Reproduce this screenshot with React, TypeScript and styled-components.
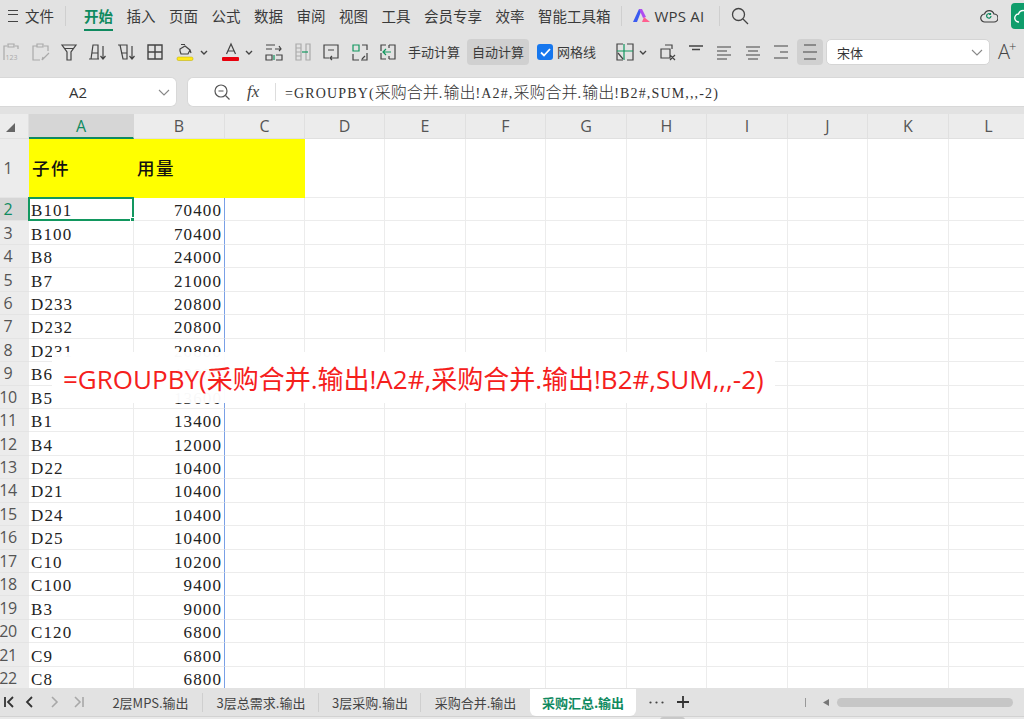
import { FC, ReactNode } from 'react'
import styled, { createGlobalStyle } from 'styled-components'

const GREEN = '#0f8a5f'
const CJK = '"Noto Sans CJK SC", "Noto Sans", sans-serif'

const Global = createGlobalStyle`
  html, body { margin: 0; padding: 0; background: #e2e2e2; }
  body { font-family: ${CJK}; overflow: hidden; }
`

const Page = styled.div`
  width: 1024px;
  height: 719px;
  display: flex;
  flex-direction: column;
  overflow: hidden;
  background: #e2e2e2;
  color: #333;
`

const MenuBar = styled.div`
  height: 35px;
  box-sizing: border-box;
  padding: 0 0 4px 8px;
  flex: none;
  display: flex;
  align-items: center;
  font-size: 14.5px;
`

const MenuItem = styled.div<{ $active?: boolean; $last?: boolean }>`
  position: relative;
  margin-right: ${(p) => (p.$last ? 0 : 13.5)}px;
  height: 31px;
  line-height: 31px;
  white-space: nowrap;
  color: ${(p) => (p.$active ? GREEN : '#3a3a3a')};
  font-weight: ${(p) => (p.$active ? 700 : 400)};
  ${(p) =>
    p.$active &&
    `&::after {
      content: '';
      position: absolute;
      left: 0;
      right: 0;
      bottom: 0;
      height: 2px;
      background: ${GREEN};
    }`}
`

const MenuSep = styled.div<{ $ml: number; $mr: number }>`
  width: 1px;
  height: 20px;
  background: #cfcfcf;
  margin: 0 ${(p) => p.$mr}px 0 ${(p) => p.$ml}px;
`

const Burger = styled.div`
  width: 10px;
  height: 10px;
  margin-right: 7px;
  border-top: 1.5px solid #444;
  border-bottom: 1.5px solid #444;
  position: relative;
  &::after {
    content: '';
    position: absolute;
    left: 0;
    right: 0;
    top: 3px;
    height: 1.5px;
    background: #444;
  }
`

const Brand = styled.div`
  display: flex;
  align-items: center;
  gap: 5px;
  font-family: 'Open Sans', sans-serif;
  font-size: 15px;
  letter-spacing: 0.2px;
  color: #3a3a3a;
`

const Spacer = styled.div`
  flex: 1;
`

const GreenTab = styled.div`
  width: 13px;
  height: 26px;
  margin-left: 13px;
  border-radius: 4px 0 0 4px;
  background: #0f9d6b;
  display: flex;
  align-items: center;
  padding-left: 3px;
  box-sizing: border-box;
  overflow: hidden;
  svg {
    flex: none;
  }
`

const ToolBar = styled.div`
  height: 34px;
  flex: none;
  display: flex;
  align-items: center;
  font-size: 13px;
`

const Tool = styled.div<{ $ml: number; $w?: number }>`
  flex: none;
  width: ${(p) => p.$w ?? 20}px;
  height: 20px;
  margin-left: ${(p) => p.$ml}px;
  display: flex;
  align-items: center;
  justify-content: center;
  color: #444;
`

const ToolText = styled.div<{ $ml: number; $pill?: boolean }>`
  flex: none;
  margin-left: ${(p) => p.$ml}px;
  padding: 0 ${(p) => (p.$pill ? 5 : 0)}px;
  height: 26px;
  line-height: 26px;
  border-radius: 4px;
  background: ${(p) => (p.$pill ? '#d0d0d0' : 'transparent')};
  color: #3a3a3a;
  white-space: nowrap;
`

const CheckBox = styled.div`
  flex: none;
  width: 16px;
  height: 16px;
  margin-left: 8px;
  border-radius: 3px;
  background: #1677ee;
  display: flex;
  align-items: center;
  justify-content: center;
`

const PillTool = styled.div`
  flex: none;
  width: 26px;
  height: 26px;
  margin-left: 6px;
  border-radius: 4px;
  background: #d0d0d0;
  color: #444;
  display: flex;
  align-items: center;
  justify-content: center;
`

const FontSelect = styled.div`
  flex: none;
  width: 164px;
  height: 26px;
  margin-left: 3px;
  box-sizing: border-box;
  padding: 0 6px 0 10px;
  background: #fff;
  border: 1px solid #d5d5d5;
  border-radius: 5px;
  display: flex;
  align-items: center;
  justify-content: space-between;
  font-size: 13px;
  color: #333;
`

const GrowFont = styled.div`
  flex: none;
  margin-left: 8px;
  display: flex;
  font-family: 'Open Sans', sans-serif;
  font-size: 20px;
  line-height: 26px;
  font-weight: 300;
  color: #444;
  sup {
    font-size: 13px;
    line-height: 14px;
    margin-left: -1px;
  }
`

const FormulaBar = styled.div`
  height: 30px;
  margin-top: 8px;
  flex: none;
  display: flex;
  gap: 10px;
`

const NameBox = styled.div`
  flex: none;
  width: 177px;
  box-sizing: border-box;
  background: #fff;
  border: 1px solid #d8d8d8;
  border-left: 0;
  border-radius: 0 6px 6px 0;
  display: flex;
  align-items: center;
  padding-left: 69px;
  padding-right: 6px;
  justify-content: space-between;
  font-family: 'Open Sans', sans-serif;
  font-size: 15px;
  color: #333;
`

const FormulaBox = styled.div`
  flex: 1;
  background: #fff;
  border: 1px solid #d8d8d8;
  border-right: 0;
  border-radius: 6px 0 0 6px;
  display: flex;
  align-items: center;
  padding-left: 25px;
  color: #444;
`

const FxLabel = styled.div`
  font-family: 'Liberation Serif', serif;
  font-style: italic;
  font-size: 17px;
  margin-left: 16px;
  width: 28px;
  color: #444;
`

const FxSep = styled.div`
  width: 1px;
  height: 18px;
  background: #ddd;
  margin-right: 9px;
`

const FormulaText = styled.div`
  font-family: 'Liberation Serif', ${CJK};
  font-size: 14px;
  letter-spacing: 1.15px;
  line-height: 28px;
  white-space: pre;
  color: #333;
  span {
    font-size: 16px;
    letter-spacing: 0;
    font-family: ${CJK};
    font-weight: 300;
  }
`

const Sheet = styled.div`
  position: relative;
  height: 574px;
  margin-top: 7px;
  flex: none;
  background: #fff;
  overflow: hidden;
`

const COLS = '29px 105px 91px 80px 80px 81px 80px 81px 80px 81px 80px 81px 80px'

const Row = styled.div<{ $h: number }>`
  display: grid;
  grid-template-columns: ${COLS};
  grid-template-rows: ${(p) => p.$h}px;
  height: ${(p) => p.$h}px;
`

const ColHead = styled.div<{ $active?: boolean }>`
  box-sizing: border-box;
  display: flex;
  align-items: center;
  justify-content: center;
  font-family: 'Open Sans', sans-serif;
  font-size: 16px;
  background: ${(p) => (p.$active ? '#d6d6d6' : '#ececec')};
  color: ${(p) => (p.$active ? GREEN : '#555')};
  border-right: 1px solid ${(p) => (p.$active ? '#d6d6d6' : '#e0e0e0')};
  border-bottom: ${(p) => (p.$active ? `2px solid ${GREEN}` : '1px solid #e0e0e0')};
`

const Corner = styled(ColHead)`
  color: #666;
  svg {
    margin: 2px 0 0 -8px;
  }
`

const RowHead = styled.div<{ $active?: boolean }>`
  box-sizing: border-box;
  display: flex;
  align-items: center;
  justify-content: center;
  padding-right: 13px;
  font-family: 'Open Sans', sans-serif;
  font-size: 16px;
  line-height: 18px;
  letter-spacing: -0.3px;
  background: ${(p) => (p.$active ? '#d6d6d6' : '#ececec')};
  color: ${(p) => (p.$active ? GREEN : '#555')};
  border-bottom: 1px solid #e4e4e4;
`

const Cell = styled.div<{ $right?: boolean; $fill?: boolean; $edge?: boolean }>`
  position: relative;
  box-sizing: border-box;
  padding: 3px 2px 0;
  display: flex;
  align-items: center;
  justify-content: ${(p) => (p.$right ? 'flex-end' : 'flex-start')};
  font-family: 'Liberation Serif', ${CJK};
  font-size: 17px;
  line-height: 17px;
  letter-spacing: 1.1px;
  color: #222;
  background: ${(p) => (p.$fill ? '#ffff00' : '#fff')};
  border-bottom: 1px solid ${(p) => (p.$fill ? '#ffff00' : '#ececec')};
  border-right: 1px solid
    ${(p) => (p.$edge ? '#7aa0e6' : p.$fill ? '#ffff00' : '#ececec')};
`

const HeadLabel = styled.span`
  font-family: ${CJK};
  font-size: 17.5px;
  font-weight: 500;
  letter-spacing: 1.5px;
  margin-top: -5px;
  padding-left: 1px;
  color: #111;
`

const ActiveFrame = styled.div`
  position: absolute;
  inset: -1px -1px -1px -1px;
  border: 2px solid #12975f;
  pointer-events: none;
  &::after {
    content: '';
    position: absolute;
    right: -3px;
    bottom: -3px;
    width: 5px;
    height: 5px;
    background: #12975f;
    border: 1px solid #fff;
    box-sizing: border-box;
  }
`

const Callout = styled.div`
  position: absolute;
  left: 52px;
  top: 238px;
  width: 723px;
  height: 51px;
  box-sizing: border-box;
  padding-left: 11px;
  background: rgba(255, 255, 255, 0.97);
  display: flex;
  align-items: center;
  font-family: 'Open Sans', ${CJK};
  font-size: 26px;
  color: #f5201c;
  white-space: pre;
`

const TabBar = styled.div`
  height: 28px;
  flex: none;
  display: flex;
  align-items: center;
  background: #e2e2e2;
  border-bottom: 1px solid #d2d2d2;
  box-sizing: content-box;
`

const NavButton = styled.div<{ $ml: number; $dim?: boolean }>`
  flex: none;
  margin-left: ${(p) => p.$ml}px;
  display: flex;
  color: ${(p) => (p.$dim ? '#a8a8a8' : '#333')};
`

const SheetTab = styled.div<{ $active?: boolean; $w: number; $ml?: number; $sep?: boolean }>`
  flex: none;
  width: ${(p) => p.$w}px;
  height: 27px;
  margin-left: ${(p) => p.$ml ?? 0}px;
  display: flex;
  align-items: center;
  justify-content: center;
  font-size: 13px;
  white-space: nowrap;
  border-radius: ${(p) => (p.$active ? '0 0 6px 6px' : '0')};
  background: ${(p) => (p.$active ? '#fff' : 'transparent')};
  color: ${(p) => (p.$active ? GREEN : '#444')};
  font-weight: ${(p) => (p.$active ? 700 : 400)};
  position: relative;
  ${(p) =>
    p.$sep &&
    `&::after {
      content: '';
      position: absolute;
      right: 0;
      top: 4px;
      bottom: 4px;
      width: 1px;
      background: #cfcfcf;
    }`}
`

const ScrollTrack = styled.div`
  width: 176px;
  height: 9px;
  margin-left: 8px;
  border-radius: 5px;
  background: #c6c6c6;
  flex: none;
`

const TickBar = styled.div`
  width: 1px;
  height: 9px;
  margin-left: 116px;
  background: #999;
  flex: none;
`

const FootStrip = styled.div`
  flex: 1;
  background: #e9e9e9;
  padding-left: 660px;
`

const FootThumb = styled.div`
  width: 25px;
  height: 3px;
  border-radius: 3px 3px 0 0;
  background: #c8c8c8;
`

const Icon: FC<{ children: ReactNode }> = ({ children }) => (
  <svg width={20} height={20} viewBox="0 0 20 20" fill="none" stroke="currentColor" strokeWidth={1.2}>
    {children}
  </svg>
)

const Caret = () => (
  <svg width="8" height="5" viewBox="0 0 8 5" fill="none" stroke="#444" strokeWidth={1.4}>
    <path d="M1 1l3 3 3-3" />
  </svg>
)

const Chevron = () => (
  <svg width="12" height="7" viewBox="0 0 12 7" fill="none" stroke="#888" strokeWidth={1.1}>
    <path d="M1 1l5 5 5-5" />
  </svg>
)

const rows: [string, string][] = [
  ['B101', '70400'],
  ['B100', '70400'],
  ['B8', '24000'],
  ['B7', '21000'],
  ['D233', '20800'],
  ['D232', '20800'],
  ['D231', '20800'],
  ['B6', '18000'],
  ['B5', '13600'],
  ['B1', '13400'],
  ['B4', '12000'],
  ['D22', '10400'],
  ['D21', '10400'],
  ['D24', '10400'],
  ['D25', '10400'],
  ['C10', '10200'],
  ['C100', '9400'],
  ['B3', '9000'],
  ['C120', '6800'],
  ['C9', '6800'],
  ['C8', '6800'],
]

const letters = 'ABCDEFGHIJKL'.split('')
const menus = ['插入', '页面', '公式', '数据', '审阅', '视图', '工具', '会员专享', '效率']

export default function App() {
  return (
    <Page>
      <Global />
      <MenuBar>
        <Burger />
        <MenuItem $last>文件</MenuItem>
        <MenuSep $ml={11} $mr={18} />
        <MenuItem $active>开始</MenuItem>
        {menus.map((m) => (
          <MenuItem key={m}>{m}</MenuItem>
        ))}
        <MenuItem $last>智能工具箱</MenuItem>
        <MenuSep $ml={10} $mr={11} />
        <Brand>
          <svg width="17" height="13" viewBox="0 0 17 13">
            <path d="M0 13L6 0h3L4 13z" fill="#3b5bf0" />
            <path d="M6 0h3l4 8-3 1z" fill="#b04df0" />
            <path d="M9 13l2-5 6 5z" fill="#ff5f8f" />
          </svg>
          WPS AI
        </Brand>
        <MenuSep $ml={15} $mr={11} />
        <svg width="18" height="18" viewBox="0 0 18 18" fill="none" stroke="#444" strokeWidth={1.3}>
          <circle cx="7.5" cy="7.5" r="6" />
          <path d="M12 12l5 5" />
        </svg>
        <Spacer />
        <svg width="18" height="16" viewBox="0 0 18 16" fill="none" stroke="#3c3c3c" strokeWidth={1.2}>
          <path d="M5 14a4 4 0 0 1-.5-8 5 5 0 0 1 9.5 0 4 4 0 0 1 0 8z" />
          <path d="M11 8a2.2 2.2 0 1 1-.8-1.8M10.5 5v1.5H9" stroke="#0f8a5f" />
        </svg>
        <GreenTab>
          <svg width="20" height="16" viewBox="0 0 20 16" fill="none" stroke="#fff" strokeWidth={1.4}>
            <path d="M5 14a4 4 0 0 1-.5-8 5 5 0 0 1 9.5 0" />
          </svg>
        </GreenTab>
      </MenuBar>

      <ToolBar>
        <Tool $ml={1}>
          <Icon>
            <g stroke="#aaa">
              <path d="M6 4H3v14M14 4h3v3M7 2h6v3H7z" />
              <text x="4.5" y="18" fontSize="7" fill="#aaa" stroke="none" fontFamily="Open Sans">123</text>
            </g>
          </Icon>
        </Tool>
        <Tool $ml={10}>
          <Icon>
            <g stroke="#aaa">
              <path d="M6 4H2v14h7M13 4h4v5M6 2h6v3H6z" />
              <path d="M11 18l7-7M11 18l1-3" />
            </g>
          </Icon>
        </Tool>
        <Tool $ml={8}>
          <Icon>
            <path d="M3 3h14l-5 7v8H8v-8zM6 6.5h8" />
          </Icon>
        </Tool>
        <Tool $ml={9}>
          <Icon>
            <path d="M1 17h10M3 17L5 3h5v14M4 11h6M15 4v13M12.5 14l2.5 3 2.5-3" />
          </Icon>
        </Tool>
        <Tool $ml={9}>
          <Icon>
            <path d="M1 3h9v14H6L3 3M4 11h6M15 4v13M12.5 14l2.5 3 2.5-3" />
          </Icon>
        </Tool>
        <Tool $ml={8}>
          <Icon>
            <path d="M3 3h14v14H3zM3 10h14M10 3v14" strokeWidth={1.4} />
          </Icon>
        </Tool>
        <Tool $ml={10}>
          <Icon>
            <path d="M6 2.5h4M5 7l5-3 5 4-2 4H6l-1-3zM15 8l1 3" />
            <rect x="2" y="15" width="16" height="3.5" rx="1.5" fill="#ffe81a" stroke="#b8a800" strokeWidth={0.5} />
          </Icon>
        </Tool>
        <Tool $ml={5} $w={8}>
          <Caret />
        </Tool>
        <Tool $ml={13}>
          <Icon>
            <path d="M5.5 12L10 2l4.5 10M7 9h6" />
            <rect x="1" y="15" width="17" height="4" rx="1" fill="#e8000c" stroke="none" />
          </Icon>
        </Tool>
        <Tool $ml={4} $w={8}>
          <Caret />
        </Tool>
        <Tool $ml={11}>
          <Icon>
            <path d="M2 3h9M2 7h6M15 4l2 3-2 2M11 7h6M2 13h6v5H2zM12 13h6v5h-6" />
            <path d="M10 13v5" stroke="#12975f" />
          </Icon>
        </Tool>
        <Tool $ml={9}>
          <Icon>
            <g stroke="#aaa">
              <path d="M3 2h5v16H3zM13 2h4v16h-4zM3 6h5M3 10h5M3 14h5" />
            </g>
            <path d="M9 10h6" stroke="#12975f" />
          </Icon>
        </Tool>
        <Tool $ml={8}>
          <Icon>
            <path d="M8 16H3V3h14v13h-5M7 8h6M13 16H9M11 14l-2 2 2 2" />
          </Icon>
        </Tool>
        <Tool $ml={9}>
          <Icon>
            <path d="M3 3h6v6H3z" stroke="#12975f" />
            <path d="M12 3h5v5M3 12v6h6M17 11v7h-6M12 17l3-3" />
          </Icon>
        </Tool>
        <Tool $ml={8}>
          <Icon>
            <path d="M11 3h6v14h-6M3 9V3h5M3 11v6h5M11 3v3M11 14v3" />
            <path d="M13 10H5M8 7l-3 3 3 3" stroke="#12975f" />
          </Icon>
        </Tool>
        <ToolText $ml={10}>手动计算</ToolText>
        <ToolText $ml={7} $pill>自动计算</ToolText>
        <CheckBox>
          <svg width="11" height="9" viewBox="0 0 11 9" fill="none" stroke="#fff" strokeWidth={1.8}>
            <path d="M1 4.5L4 7.5 10 1" />
          </svg>
        </CheckBox>
        <ToolText $ml={4}>网格线</ToolText>
        <Tool $ml={19}>
          <Icon>
            <path d="M8 2H2v16h6M12 2h6v16h-6" />
            <path d="M2 9h16M9 2v16" stroke="#12975f" />
            <path d="M3 11l5 6" />
          </Icon>
        </Tool>
        <Tool $ml={4} $w={8}>
          <Caret />
        </Tool>
        <Tool $ml={11}>
          <Icon>
            <path d="M3 7h9v9H3zM7 3h7v4M12 13l5 5M17 13l-5 5" />
          </Icon>
        </Tool>
        <Tool $ml={8}>
          <Icon>
            <path d="M3 4h14M6 7.5h8" strokeWidth={1.4} />
          </Icon>
        </Tool>
        <Tool $ml={8}>
          <Icon>
            <path d="M3 5h14M3 9h10M3 13h14M3 17h10" />
          </Icon>
        </Tool>
        <Tool $ml={9}>
          <Icon>
            <path d="M3 5h14M5 9h10M3 13h14M5 17h10" />
          </Icon>
        </Tool>
        <Tool $ml={8}>
          <Icon>
            <path d="M3 4h14M9 10h8M3 16h14" />
          </Icon>
        </Tool>
        <PillTool>
          <Icon>
            <path d="M4 3h12M3 10h14M4 17h12" />
          </Icon>
        </PillTool>
        <FontSelect>
          宋体
          <Chevron />
        </FontSelect>
        <GrowFont>
          A<sup>+</sup>
        </GrowFont>
      </ToolBar>

      <FormulaBar>
        <NameBox>
          A2
          <Chevron />
        </NameBox>
        <FormulaBox>
          <svg width="18" height="18" viewBox="0 0 18 18" fill="none" stroke="#555" strokeWidth={1.2}>
            <circle cx="8" cy="8" r="6" />
            <path d="M12.5 12.5l4 4M5.5 8h5" />
          </svg>
          <FxLabel>fx</FxLabel>
          <FxSep />
          <FormulaText>
            =GROUPBY(<span>采购合并</span>.<span>输出</span>!A2#,<span>采购合并</span>.<span>输出</span>!B2#,SUM,,,-2)
          </FormulaText>
        </FormulaBox>
      </FormulaBar>

      <Sheet>
        <Row $h={25}>
          <Corner>
            <svg width="9" height="9" viewBox="0 0 9 9">
              <path d="M9 0v9H0z" fill="#666" />
            </svg>
          </Corner>
          {letters.map((l) => (
            <ColHead key={l} $active={l === 'A'}>
              {l}
            </ColHead>
          ))}
        </Row>
        <Row $h={59}>
          <RowHead>1</RowHead>
          <Cell $fill>
            <HeadLabel>子件</HeadLabel>
          </Cell>
          <Cell $fill>
            <HeadLabel>用量</HeadLabel>
          </Cell>
          <Cell $fill />
          {letters.slice(3).map((l) => (
            <Cell key={l} />
          ))}
        </Row>
        {rows.map(([name, qty], i) => (
          <Row key={name} $h={23.45}>
            <RowHead $active={i === 0}>{i + 2}</RowHead>
            <Cell>
              {name}
              {i === 0 && <ActiveFrame />}
            </Cell>
            <Cell $right $edge>
              {qty}
            </Cell>
            {letters.slice(2).map((l) => (
              <Cell key={l} />
            ))}
          </Row>
        ))}
        <Callout>=GROUPBY(采购合并.输出!A2#,采购合并.输出!B2#,SUM,,,-2)</Callout>
      </Sheet>

      <TabBar>
        <NavButton $ml={3}>
          <svg width="12" height="12" viewBox="0 0 12 12" fill="none" stroke="currentColor" strokeWidth={1.8}>
            <path d="M2 1v10M10 1L5 6l5 5" />
          </svg>
        </NavButton>
        <NavButton $ml={9}>
          <svg width="12" height="12" viewBox="0 0 12 12" fill="none" stroke="currentColor" strokeWidth={1.8}>
            <path d="M8 1L3 6l5 5" />
          </svg>
        </NavButton>
        <NavButton $ml={12} $dim>
          <svg width="12" height="12" viewBox="0 0 12 12" fill="none" stroke="currentColor" strokeWidth={1.6}>
            <path d="M4 1l5 5-5 5" />
          </svg>
        </NavButton>
        <NavButton $ml={13} $dim>
          <svg width="12" height="12" viewBox="0 0 12 12" fill="none" stroke="currentColor" strokeWidth={1.6}>
            <path d="M2 1l5 5-5 5M10 1v10" />
          </svg>
        </NavButton>
        <SheetTab $w={105} $ml={13} $sep>2层MPS.输出</SheetTab>
        <SheetTab $w={116} $sep>3层总需求.输出</SheetTab>
        <SheetTab $w={102} $sep>3层采购.输出</SheetTab>
        <SheetTab $w={109}>采购合并.输出</SheetTab>
        <SheetTab $w={106} $active>采购汇总.输出</SheetTab>
        <NavButton $ml={13}>
          <svg width="15" height="3" viewBox="0 0 15 3" fill="#444">
            <circle cx="1.5" cy="1.5" r="1.1" />
            <circle cx="7.5" cy="1.5" r="1.1" />
            <circle cx="13.5" cy="1.5" r="1.1" />
          </svg>
        </NavButton>
        <NavButton $ml={13}>
          <svg width="12" height="12" viewBox="0 0 12 12" fill="none" stroke="#333" strokeWidth={1.8}>
            <path d="M6 0v12M0 6h12" />
          </svg>
        </NavButton>
        <TickBar />
        <NavButton $ml={17}>
          <svg width="6" height="7" viewBox="0 0 6 7" fill="#777">
            <path d="M6 0v7L0 3.5z" />
          </svg>
        </NavButton>
        <ScrollTrack />
      </TabBar>
      <FootStrip>
        <FootThumb />
      </FootStrip>
    </Page>
  )
}
